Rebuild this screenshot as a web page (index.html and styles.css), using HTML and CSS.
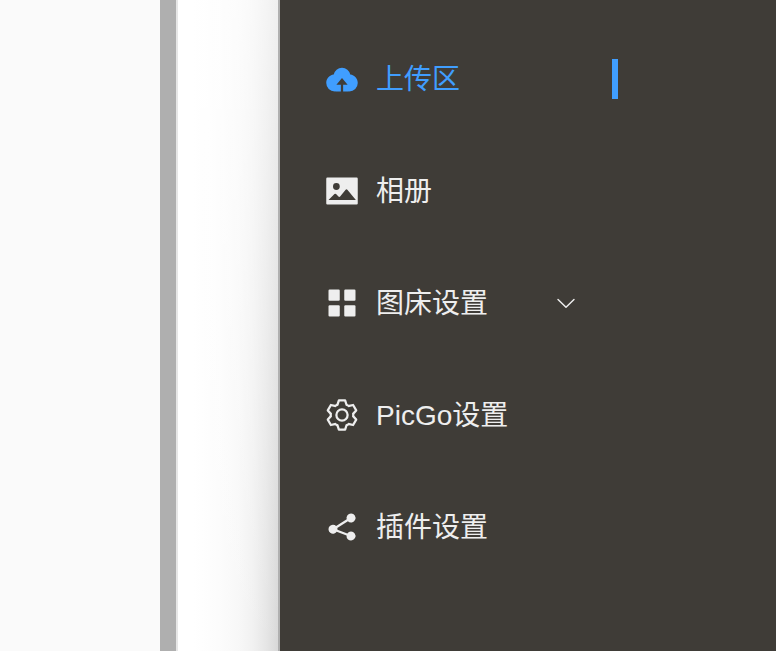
FILE: index.html
```html
<!DOCTYPE html>
<html lang="zh-CN">
<head>
<meta charset="utf-8">
<title>PicGo</title>
<link rel="stylesheet" href="styles.css">
</head>
<body>
<div class="page">
  <div class="margin"></div>
  <div class="gutter"></div>
  <div class="backdrop"></div>
  <nav class="window">
    <ul class="menu">
      <li><a class="item active" href="#upload">
        <svg class="icon" viewBox="0 0 1024 1024"><path d="M544 864V672h128L512 480 352 672h128v192H320v-1.6c-5.376.32-10.496 1.6-16 1.6A240 240 0 0 1 64 624c0-123.136 93.12-223.488 212.608-237.248A239.808 239.808 0 0 1 512 192a239.872 239.872 0 0 1 235.456 194.752c119.488 13.76 212.48 114.112 212.48 237.248a240 240 0 0 1-240 240c-5.376 0-10.56-1.28-16-1.6v1.6H544z"/></svg>
        <span class="label">上传区</span></a></li>
      <li><a class="item" href="#gallery">
        <svg class="icon" viewBox="0 0 1024 1024"><path d="M96 896a32 32 0 0 1-32-32V160a32 32 0 0 1 32-32h832a32 32 0 0 1 32 32v704a32 32 0 0 1-32 32H96zm315.52-228.48-68.928-68.928a32 32 0 0 0-45.248 0L128 768.064h778.688l-242.112-290.56a32 32 0 0 0-49.216 0L458.752 665.408a32 32 0 0 1-47.232 2.112zM256 384a96 96 0 1 0 192.064-.064A96 96 0 0 0 256 384z"/></svg>
        <span class="label">相册</span></a></li>
      <li><button class="item" type="button" aria-expanded="false">
        <svg class="icon" viewBox="0 0 1024 1024"><rect x="128" y="128" width="320" height="320" rx="32"/><rect x="576" y="128" width="320" height="320" rx="32"/><rect x="128" y="576" width="320" height="320" rx="32"/><rect x="576" y="576" width="320" height="320" rx="32"/></svg>
        <span class="label">图床设置</span>
        <svg class="arrow" viewBox="0 0 1024 1024"><path d="M831.872 340.864 512 652.672 192.128 340.864a30.592 30.592 0 0 0-42.752 0 29.12 29.12 0 0 0 0 41.6L489.664 714.24a32 32 0 0 0 44.672 0l340.288-331.712a29.12 29.12 0 0 0 0-41.728 30.592 30.592 0 0 0-42.752 0z"/></svg></button></li>
      <li><a class="item" href="#settings">
        <svg class="icon" viewBox="0 0 1024 1024"><path d="M600.704 64a32 32 0 0 1 30.464 22.208l35.2 109.376c14.784 7.232 28.928 15.36 42.432 24.512l112.384-24.192a32 32 0 0 1 34.432 15.36L944.32 364.8a32 32 0 0 1-4.032 37.504l-77.12 85.12a357.12 357.12 0 0 1 0 49.024l77.12 85.248a32 32 0 0 1 4.032 37.504l-88.704 153.6a32 32 0 0 1-34.432 15.296L708.8 803.904c-13.44 9.088-27.648 17.28-42.368 24.512l-35.264 109.376A32 32 0 0 1 600.704 960H423.296a32 32 0 0 1-30.464-22.208L357.696 828.48a351.616 351.616 0 0 1-42.56-24.64l-112.32 24.256a32 32 0 0 1-34.432-15.36L79.68 659.2a32 32 0 0 1 4.032-37.504l77.12-85.248a357.12 357.12 0 0 1 0-48.896l-77.12-85.248A32 32 0 0 1 79.68 364.8l88.704-153.6a32 32 0 0 1 34.432-15.296l112.32 24.256c13.568-9.152 27.776-17.408 42.56-24.64l35.2-109.312A32 32 0 0 1 423.232 64H600.64zm-23.424 64H446.72l-36.352 113.088-24.512 11.968a294.113 294.113 0 0 0-34.816 20.096l-22.656 15.36-116.224-25.088-65.28 113.152 79.68 88.192-1.92 27.136a293.12 293.12 0 0 0 0 40.192l1.92 27.136-79.808 88.192 65.344 113.152 116.224-25.024 22.656 15.296a294.113 294.113 0 0 0 34.816 20.096l24.512 11.968L446.72 896h130.688l36.48-113.152 24.448-11.904a288.282 288.282 0 0 0 34.752-20.096l22.592-15.296 116.288 25.024 65.28-113.152-79.744-88.192 1.92-27.136a293.12 293.12 0 0 0 0-40.256l-1.92-27.136 79.808-88.128-65.344-113.152-116.288 24.96-22.592-15.232a287.616 287.616 0 0 0-34.752-20.096l-24.448-11.904L577.344 128zM512 320a192 192 0 1 1 0 384 192 192 0 0 1 0-384zm0 64a128 128 0 1 0 0 256 128 128 0 0 0 0-256z"/></svg>
        <span class="label">PicGo设置</span></a></li>
      <li><a class="item" href="#plugins">
        <svg class="icon" viewBox="0 0 1024 1024"><path d="m679.872 348.8-301.76 188.608a127.808 127.808 0 0 1 5.12 52.16l279.936 104.96a128 128 0 1 1-22.464 59.904l-279.872-104.96a128 128 0 1 1-16.64-166.272l301.696-188.608a128 128 0 1 1 33.92 54.272z"/></svg>
        <span class="label">插件设置</span></a></li>
    </ul>
  </nav>
</div>
</body>
</html>
```
FILE: styles.css
```css
body {
  margin: 0;
  font-family: "Liberation Sans", "Noto Sans CJK SC", sans-serif;
}

.page {
  display: flex;
  min-height: 100vh;
  background: #fff;
}

.margin {
  flex: 0 0 160px;
  background: #fafafa;
}

.gutter {
  flex: 0 0 16px;
  background: #afafaf;
  border-right: 2px solid #e6e6e6;
}

.backdrop {
  flex: 0 0 100px;
  background:
    linear-gradient(to bottom, rgba(255, 255, 255, 0.6), rgba(255, 255, 255, 0)),
    linear-gradient(to right, #fff 0, #fff 15%, #fcfcfc 40%, #f8f8f8 60%, #f1f1f1 75%, #e6e6e6 88%, #d8d8d8 100%);
}

.window {
  flex: 1;
  background: #3f3c37;
  border-left: 2px solid #b0b0b0;
}

.menu {
  max-width: 338px;
  margin: 0;
  padding: 23px 0 0;
  list-style: none;
}

.item {
  position: relative;
  box-sizing: border-box;
  display: flex;
  align-items: center;
  gap: 16px;
  width: 100%;
  height: 112px;
  padding: 0 40px 0 44px;
  border: 0;
  background: none;
  color: #eee;
  font-family: inherit;
  font-size: 28px;
  line-height: 40px;
  text-align: left;
  text-decoration: none;
  cursor: pointer;
}

.item.active {
  color: #409eff;
}

.item.active::after {
  content: "";
  position: absolute;
  top: 36px;
  right: 0;
  width: 6px;
  height: 40px;
  background: #409eff;
}

.label {
  padding-top: 2px;
}

.icon {
  width: 36px;
  height: 36px;
  fill: currentColor;
}

.arrow {
  width: 24px;
  height: 24px;
  margin-left: auto;
  fill: currentColor;
}
```
